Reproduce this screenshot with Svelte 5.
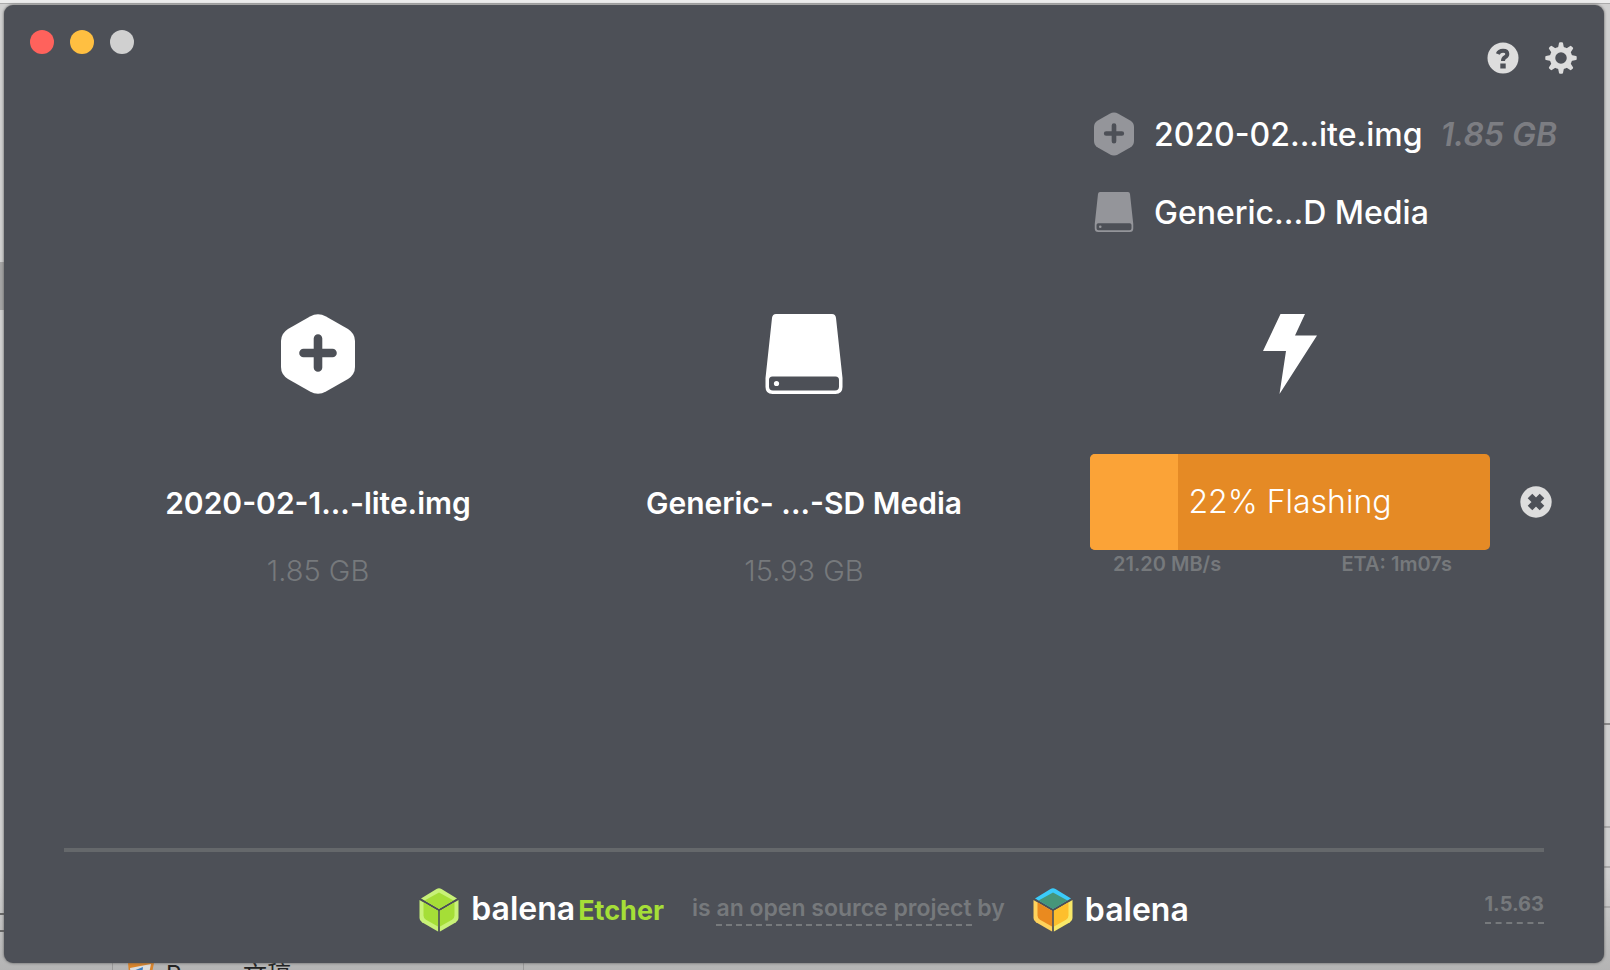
<script>
  const hex = 'M29 2.4Q37 -2 45 2.4L67 15Q74 19.5 74 27V53Q74 60.500 67 65L45 77.600Q37 82 29 77.600L7 65Q0 60.500 0 53V27Q0 19.500 7 15Z';
  const percent = 22;
</script>

{#snippet imageIcon()}
  <svg viewBox="0 0 74 80" aria-hidden="true">
    <path fill="currentColor" d={hex} />
    <path d="M37 24.500V53.500M22.500 39H51.500" fill="none" stroke="#4d5057" stroke-width="8.600" stroke-linecap="round" />
  </svg>
{/snippet}

{#snippet driveIcon()}
  <svg viewBox="0 0 78 80" aria-hidden="true">
    <path fill="currentColor" fill-rule="evenodd" d="M11 0H67Q70.500 0 71 4L77.500 64V73Q77.500 80 70.500 80H7.500Q.5 80 .5 73V64L7 4Q7.500 0 11 0ZM7.500 62.500Q4 62.500 4 66V72.500Q4 76.500 8 76.500H70Q74 76.500 74 72.500V66Q74 62.500 70.500 62.500Z" />
    <circle cx="11.500" cy="69.500" r="2.600" fill="currentColor" />
  </svg>
{/snippet}

{#snippet cube(top, topEdge, left, leftEdge, right, rightEdge)}
  <svg viewBox="0 0 40 44" aria-hidden="true">
    <path fill={topEdge} d="M17.500 1Q20 -.4 22.500 1L38 10.500L20 21L2 10.500Z" />
    <path fill={leftEdge} d="M.5 12L19.400 23V43.700L3 34.300Q.5 32.700 .5 30Z" />
    <path fill={rightEdge} d="M39.500 12L20.600 23V43.700L37 34.300Q39.500 32.700 39.500 30Z" />
    <path fill={top} d="M20 4.500L34.500 12.600L20 21L5.500 12.600Z" />
    <path fill={left} d="M4.500 14.300L19.400 23V38.800L7 31.700Q4.500 30.200 4.500 27.500Z" />
    <path fill={right} d="M35.500 14.300L20.600 23V38.800L33 31.700Q35.500 30.200 35.500 27.500Z" />
    <path d="M1 11L20 22L39 11M20 22V44" fill="none" stroke="#4d5057" stroke-width="1.400" />
  </svg>
{/snippet}

<div class="desktop">
  <div class="behind left" aria-hidden="true"></div>
  <div class="behind field" aria-hidden="true"></div>
  <div class="behind rows" aria-hidden="true"></div>
  <div class="behind right" aria-hidden="true"></div>
  <div class="behind bottom" aria-hidden="true">
    <svg viewBox="0 0 26 20"><path fill="#d9842b" d="M0 0H26L22 20H2Z" /><path fill="#ddd" d="M2 5L23 1L19 20H4Z" /><path fill="#3b7fc4" d="M5 8L15 4L13 20H6Z" /></svg>
    <span>Pages 文稿</span>
  </div>

  <main class="window">
    <header>
      <div class="lights">
        <button class="close" aria-label="Close"></button>
        <button class="minimise" aria-label="Minimise"></button>
        <button class="zoom" aria-label="Zoom" disabled></button>
      </div>
      <div class="tools">
        <button aria-label="Help">
          <svg viewBox="0 0 32 32"><circle cx="16" cy="16" r="15.500" fill="#ddd" /><path d="M10.800 12Q12 8.700 16 8.700Q20.300 8.700 20.300 12Q20.300 14 18 15.300Q16 16.500 16 19" fill="none" stroke="#4d5057" stroke-width="4" /><path fill="#4d5057" d="M13.300 21.500h5.400v5h-5.400z" /></svg>
        </button>
        <button aria-label="Settings">
          <svg viewBox="0 0 32 32">
            <g fill="#ddd">
              {#each [0, 45, 90, 135, 180, 225, 270, 315] as angle}
                <path d="M12.800 7L14 1Q14.200 .3 15 .3H17Q17.800 .3 18 1L19.200 7Z" transform="rotate({angle} 16 16)" />
              {/each}
            </g>
            <circle cx="16" cy="16" r="8.500" fill="none" stroke="#ddd" stroke-width="5.500" />
          </svg>
        </button>
      </div>
    </header>

    <section class="summary">
      <div class="entry">{@render imageIcon()}<span>2020-02...ite.img</span><em>1.85 GB</em></div>
      <div class="entry">{@render driveIcon()}<span>Generic...D Media</span></div>
    </section>

    <section class="steps">
      <div class="step">
        {@render imageIcon()}
        <h2>2020-02-1...-lite.img</h2>
        <p>1.85 GB</p>
      </div>
      <div class="step">
        {@render driveIcon()}
        <h2>Generic- ...-SD Media</h2>
        <p>15.93 GB</p>
      </div>
      <div class="step flash">
        <svg viewBox="0 0 54 80" aria-hidden="true"><path fill="currentColor" d="M17.500 0H42L32 21.500H54L16.500 80L23 37H0Z" /></svg>
        <div class="action">
          <button class="progress"><span class="fill" style="width: {percent}%"></span><span class="label">{percent}% Flashing</span></button>
          <button class="cancel" aria-label="Cancel">
            <svg viewBox="0 0 32 32"><circle cx="16" cy="16" r="15.700" fill="#ddd" /><path d="M10 10L22 22M22 10L10 22" stroke="#4d5057" stroke-width="6.500" /></svg>
          </button>
        </div>
        <div class="stats"><span>21.20 MB/s</span><span>ETA: 1m07s</span></div>
      </div>
    </section>

    <footer>
      <a class="brand" href="#etcher">{@render cube('#a5de37', '#c8f178', '#a5de37', '#c8f178', '#a5de37', '#c8f178')}<span>balena<b>Etcher</b></span></a>
      <span class="note">is <a href="#source">an open source project</a> by</span>
      <a class="brand" href="#balena">{@render cube('#46967a', '#3bcbfa', '#ea8a1f', '#ffd25c', '#fdbf2d', '#f8e868')}<span>balena</span></a>
      <a class="version" href="#version">1.5.63</a>
    </footer>
  </main>
</div>

<style>
  :global(body) { margin: 0; }
  .desktop {
    position: relative;
    box-sizing: border-box;
    min-height: 100vh;
    padding: 5px 6px 7px 4px;
    display: flex;
    overflow: hidden;
    background: linear-gradient(#ececec 0 3px, #aaa 3px 4px, #d0d0d0 4px 90%, #b4b4b4);
    font-family: Inter, "Noto Sans CJK SC", sans-serif;
  }
  .behind { position: absolute; box-sizing: border-box; }
  .left { left: 0; top: 262px; width: 4px; height: 48px; background: #a4a4a4; }
  .field { left: 0; bottom: 38px; width: 4px; height: 19px; border: solid #666; border-width: 2px 0; }
  .right { right: 0; top: 723px; width: 6px; height: 2px; background: #888; }
  .rows { right: 0; bottom: 24px; width: 6px; height: 120px; background: repeating-linear-gradient(#aaa 0 2px, transparent 2px 40px); }
  .bottom { left: 112px; top: 963px; width: 412px; height: 30px; border: solid #999; border-width: 0 1px; color: #222; font-size: 24px; line-height: 24px; }
  .bottom svg { position: absolute; left: 15px; top: 0; width: 26px; }
  .bottom span { position: absolute; left: 53px; top: 0; }
  .window {
    position: relative;
    flex: 1;
    display: flex;
    flex-direction: column;
    border-radius: 9px;
    background: #4d5057;
    box-shadow: 0 0 3px #555;
    color: #fff;
  }
  button { padding: 0; border: 0; background: none; color: inherit; font: inherit; }
  a { color: inherit; text-decoration: none; }
  svg { display: block; }
  header { display: flex; justify-content: space-between; padding: 25px 27px 0 26px; }
  .lights { display: flex; gap: 16px; }
  .lights button { width: 24px; height: 24px; border-radius: 50%; }
  .close { background: #ff625c; }
  .minimise { background: #ffbf41; }
  .zoom { background: #d0d0d0; }
  .tools { display: flex; gap: 26px; padding-top: 12px; }
  .tools svg, .cancel svg { width: 32px; height: 32px; }
  .summary { align-self: flex-end; width: 510px; padding-top: 21px; }
  .entry { display: flex; align-items: center; height: 78px; font-size: 32px; font-weight: 500; white-space: nowrap; }
  .summary svg { width: 40px; height: 44px; margin-right: 20px; color: #94959a; }
  .summary .entry:last-child svg { height: 40px; }
  .entry em { margin-left: 18px; color: #7c7d82; font-weight: 600; }
  .steps { display: grid; grid-template-columns: 400px 400px 400px; justify-content: space-between; padding: 63px 114px 0; }
  .step { display: flex; flex-direction: column; align-items: center; }
  .step > svg { height: 80px; }
  h2 { margin: 85px 0 0; font-size: 30px; line-height: 48px; font-weight: 600; white-space: nowrap; }
  p { margin: 24px 0 0; color: #76797c; font-size: 29px; line-height: 40px; font-weight: 300; }
  .action { display: flex; align-items: center; align-self: flex-start; gap: 30px; margin-top: 60px; }
  .progress { position: relative; width: 400px; height: 96px; overflow: hidden; border-radius: 5px; background: #e58a25; font-size: 32px; line-height: 44px; font-weight: 300; }
  .fill { position: absolute; inset: 0 auto 0 0; background: #fba337; }
  .label { position: relative; }
  .stats { display: flex; justify-content: space-between; align-self: stretch; padding: 0 38px 0 23px; color: #76797c; font-size: 20px; line-height: 28px; font-weight: 600; }
  footer { display: flex; align-items: center; justify-content: center; position: relative; gap: 28px; height: 111px; margin: auto 60px 0; border-top: 4px solid #65686b; }
  .brand { display: flex; align-items: center; gap: 12px; padding-top: 4px; font-size: 32px; line-height: 40px; font-weight: 600; }
  .brand svg { width: 40px; height: 44px; }
  b { margin-left: 3px; color: #a5de37; font-size: 27px; font-weight: 700; }
  .note { color: #76797c; font-size: 23px; line-height: 28px; font-weight: 600; white-space: nowrap; }
  .note a { padding-bottom: 2px; border-bottom: 2px dashed #76797c; }
  .version { position: absolute; right: 0; top: 40px; padding-bottom: 6px; border-bottom: 2px dashed #76797c; color: #76797c; font-size: 20px; line-height: 24px; font-weight: 700; }
</style>
